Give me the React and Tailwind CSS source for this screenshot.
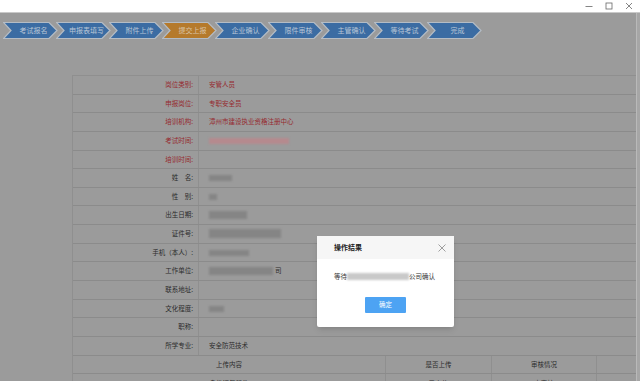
import React from 'react';

// Pasos del proceso de inscripción
const STEPS = ['考试报名', '申报表填写', '附件上传', '提交上报', '企业确认', '限件审核', '主管确认', '等待考试', '完成'];
const CURRENT = 3;

const Blur = ({ w, h = 'h-[6px]', red }) => (
  <span className={`inline-block ${w} ${h} ${red ? 'bg-[#b58a8e]' : 'bg-[#858585]'} blur-[1px] align-middle`} />
);

const ROWS = [
  { label: '岗位类别:', value: '安管人员', red: true },
  { label: '申报岗位:', value: '专职安全员', red: true },
  { label: '培训机构:', value: '漳州市建设执业资格注册中心', red: true },
  { label: '考试时间:', value: <Blur w="w-[80px]" red />, red: true },
  { label: '培训时间:', value: '', red: true },
  { label: '姓　名:', value: <Blur w="w-[23px]" /> },
  { label: '性　别:', value: <Blur w="w-[8px]" /> },
  { label: '出生日期:', value: <Blur w="w-[38px]" h="h-[8px]" /> },
  { label: '证件号:', value: <Blur w="w-[72px]" h="h-[9px]" /> },
  { label: '手机（本人）:', value: <Blur w="w-[40px]" /> },
  { label: '工作单位:', value: <span className="flex items-center gap-[2px]"><Blur w="w-[64px]" h="h-[8px]" /><span>司</span></span> },
  { label: '联系地址:', value: '' },
  { label: '文化程度:', value: <Blur w="w-[15px]" /> },
  { label: '职称:', value: '' },
  { label: '所学专业:', value: '安全防范技术' },
];

const Step = ({ text, active }) => (
  <div className="relative w-[55px] h-[17px] -mr-[2px] shrink-0 flex items-center justify-center">
    <svg className="absolute inset-0" width="55" height="17" viewBox="0 0 55 17">
      <polygon
        points="0.5,0.5 46,0.5 54,8.5 46,16.5 0.5,16.5 8,8.5"
        fill={active ? '#b57a2c' : '#3b6ca3'}
        stroke="#b4bcc5"
        strokeWidth="1.2"
      />
    </svg>
    <span className={`relative pl-[6px] text-[7px] ${active ? 'text-[#d9c4a6]' : 'text-[#b9c6d6]'}`}>{text}</span>
  </div>
);

export default function App() {
  return (
    <div className="relative w-[640px] h-[381px] overflow-hidden bg-[#9b9b9b] text-[6.5px] text-[#2b2b2b] font-['Noto_Sans_CJK_SC',sans-serif] flex flex-col">
      {/* barra de la ventana */}
      <div className="h-[13px] shrink-0 bg-white border-b border-[#c9c9c9] flex justify-end items-center pr-[7px] gap-[12px]">
        <svg width="8" height="8" viewBox="0 0 8 8"><path d="M0.5 4.5h7" stroke="#666" strokeWidth="0.8" /></svg>
        <svg width="8" height="8" viewBox="0 0 8 8"><rect x="1" y="1" width="6" height="6" fill="none" stroke="#666" strokeWidth="0.8" /></svg>
        <svg width="8" height="8" viewBox="0 0 8 8"><path d="M1 1l6 6M7 1l-6 6" stroke="#666" strokeWidth="0.8" /></svg>
      </div>

      <div className="flex flex-1 min-h-0">
        <div className="flex-1 min-w-0">
          {/* pasos */}
          <div className="flex pl-[3px] pt-[9px]">
            {STEPS.map((s, i) => (
              <Step key={s} text={s} active={i === CURRENT} />
            ))}
          </div>

          {/* tabla de datos */}
          <div className="ml-[72px] mt-[36px] border-l border-t border-[#8f8f8f]">
            {ROWS.map((r) => (
              <div key={r.label} className="flex h-[18.65px] border-b border-[#8b8b8b]">
                <div className={`w-[126px] shrink-0 border-r border-[#8f8f8f] flex items-center justify-end pr-[5px] ${r.red ? 'text-[#962a2f]' : ''}`}>
                  {r.label}
                </div>
                <div className={`flex-1 flex items-center pl-[10px] ${r.red ? 'text-[#962a2f]' : ''}`}>{r.value}</div>
              </div>
            ))}
            <div className="flex h-[18.65px] border-b border-[#8b8b8b]">
              <div className="w-[313px] border-r border-[#8f8f8f] flex items-center justify-center">上传内容</div>
              <div className="w-[106px] border-r border-[#8f8f8f] flex items-center justify-center">是否上传</div>
              <div className="w-[105px] border-r border-[#8f8f8f] flex items-center justify-center">审核情况</div>
              <div className="flex-1" />
            </div>
            <div className="flex h-[18.65px]">
              <div className="w-[313px] border-r border-[#8f8f8f] flex items-center justify-center">身份证复印件</div>
              <div className="w-[106px] border-r border-[#8f8f8f] flex items-center justify-center">已上传</div>
              <div className="w-[105px] border-r border-[#8f8f8f] flex items-center justify-center">未审核</div>
              <div className="flex-1" />
            </div>
          </div>
        </div>
        <div className="w-[4px] shrink-0 border-l border-[#b9b9b9] bg-[#a6a6a6]" />
      </div>

      {/* diálogo de resultado */}
      <div className="absolute left-[317px] top-[236px] w-[137px] h-[91px] bg-white rounded-[2px] shadow-md flex flex-col">
        <div className="h-[23px] bg-[#f6f6f6] flex items-center justify-between pl-[17px] pr-[8px]">
          <span className="font-bold text-[7px] text-[#222]">操作结果</span>
          <svg width="8" height="8" viewBox="0 0 8 8"><path d="M0.5 0.5l7 7M7.5 0.5l-7 7" stroke="#888" strokeWidth="0.8" /></svg>
        </div>
        <div className="flex items-center pl-[17px] mt-[13px] text-[#333]">
          <span>等待</span>
          <span className="inline-block w-[62px] h-[7px] bg-[#c9c9c9] blur-[0.8px]" />
          <span>公司确认</span>
        </div>
        <div className="flex justify-center mt-[15px]">
          <button className="w-[41px] h-[16px] bg-[#4da3f3] text-white text-[6.5px] rounded-[1px]">确定</button>
        </div>
      </div>
    </div>
  );
}
